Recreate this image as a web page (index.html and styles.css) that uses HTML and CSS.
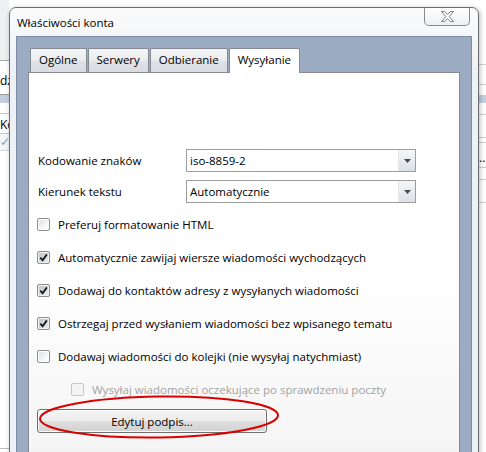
FILE: index.html
```html
<!DOCTYPE html>
<html lang="pl">
<head>
<meta charset="utf-8">
<title>Właściwości konta</title>
<link rel="stylesheet" href="styles.css">
</head>
<body>
<div class="desktop">
  <div class="app">
    <div class="pane pane-left">
      <div class="bg-top"></div>
      <div class="brow brow-dz">dz</div>
      <div class="bband"></div>
      <div class="bgap"></div>
      <div class="brow brow-ko">Ko</div>
      <div class="brow brow-check">✓</div>
      <div class="bfill"></div>
    </div>
    <div class="pane pane-right">
      <div class="r-top"></div>
      <div class="r-row r-h19"></div>
      <div class="r-gap10"></div>
      <div class="bband"></div>
      <div class="r-row r-h11"></div>
      <div class="r-row r-h22"></div>
      <div class="r-row r-h4"></div>
      <div class="r-row r-dots">...</div>
      <div class="r-row r-h11"></div>
      <div class="r-row r-h22"></div>
    </div>
  </div>

  <div class="dialog">
    <div class="titlebar">
      <span class="title">Właściwości konta</span>
      <div class="close">
        <svg width="13" height="11" viewBox="0 0 13 11"><path d="M0.5 0.5 H3.6 L6.5 3.4 L9.4 0.5 H12.5 L8.2 5.5 L12.5 10.5 H9.4 L6.5 7.6 L3.6 10.5 H0.5 L4.8 5.5 Z" fill="#ffffff" stroke="#7d7d7d" stroke-width="1" stroke-linejoin="round"/></svg>
      </div>
    </div>
    <div class="client">
      <div class="tabs">
        <div class="tab">Ogólne</div>
        <div class="tab">Serwery</div>
        <div class="tab">Odbieranie</div>
        <div class="tab active">Wysyłanie</div>
      </div>
      <div class="panel">
        <div class="field">
          <span class="field-label">Kodowanie znaków</span>
          <div class="select">
            <span class="select-value">iso-8859-2</span>
            <span class="select-btn"><svg width="7" height="4" viewBox="0 0 7 4"><path d="M0 0 H7 L3.5 4 Z" fill="#4b4b4b"/></svg></span>
          </div>
        </div>
        <div class="field field-second">
          <span class="field-label">Kierunek tekstu</span>
          <div class="select">
            <span class="select-value">Automatycznie</span>
            <span class="select-btn"><svg width="7" height="4" viewBox="0 0 7 4"><path d="M0 0 H7 L3.5 4 Z" fill="#4b4b4b"/></svg></span>
          </div>
        </div>

        <div class="check-row first">
          <span class="cb"></span>
          <span class="cb-label">Preferuj formatowanie HTML</span>
        </div>
        <div class="check-row">
          <span class="cb checked"><svg width="9" height="9" viewBox="0 0 9 9"><path d="M1.3 4.6 L3.6 7.2 L7.9 1.4" fill="none" stroke="#1a1a1a" stroke-width="1.8"/></svg></span>
          <span class="cb-label">Automatycznie zawijaj wiersze wiadomości wychodzących</span>
        </div>
        <div class="check-row">
          <span class="cb checked"><svg width="9" height="9" viewBox="0 0 9 9"><path d="M1.3 4.6 L3.6 7.2 L7.9 1.4" fill="none" stroke="#1a1a1a" stroke-width="1.8"/></svg></span>
          <span class="cb-label">Dodawaj do kontaktów adresy z wysyłanych wiadomości</span>
        </div>
        <div class="check-row">
          <span class="cb checked"><svg width="9" height="9" viewBox="0 0 9 9"><path d="M1.3 4.6 L3.6 7.2 L7.9 1.4" fill="none" stroke="#1a1a1a" stroke-width="1.8"/></svg></span>
          <span class="cb-label">Ostrzegaj przed wysłaniem wiadomości bez wpisanego tematu</span>
        </div>
        <div class="check-row">
          <span class="cb"></span>
          <span class="cb-label">Dodawaj wiadomości do kolejki (nie wysyłaj natychmiast)</span>
        </div>
        <div class="check-row sub disabled">
          <span class="cb"></span>
          <span class="cb-label">Wysyłaj wiadomości oczekujące po sprawdzeniu poczty</span>
        </div>

        <button class="btn">Edytuj podpis...</button>

        <svg class="annotation" width="246" height="50" viewBox="0 0 246 50">
          <ellipse cx="122" cy="23" rx="119" ry="20.5" transform="rotate(-0.8 122 23)" fill="none" stroke="#d90000" stroke-width="2"/>
        </svg>
      </div>
    </div>
  </div>
</div>
</body>
</html>
```

FILE: styles.css
```css
* { box-sizing: border-box; }

html, body {
  margin: 0;
  padding: 0;
  background: #ffffff;
}

body {
  font-family: "Open Sans", "Noto Sans", sans-serif;
  font-size: 11.5px;
  color: #000000;
}

.desktop {
  position: relative;
  width: 486px;
  height: 452px;
  overflow: hidden;
}

/* ---------- background application ---------- */
.app {
  display: flex;
  justify-content: space-between;
  height: 452px;
}

.pane {
  display: flex;
  flex-direction: column;
  overflow: hidden;
  white-space: nowrap;
  font-size: 12px;
}

.pane-left { width: 9px; }
.pane-right { width: 7px; }

.bg-top {
  height: 61px;
  background: #eef0f2;
  border-bottom: 1px solid #a8a8a8;
}

.brow {
  line-height: 16px;
  overflow: hidden;
}

.brow-dz {
  height: 34px;
  padding-top: 12px;
  border-bottom: 1px solid #9c9c9c;
}

.bband {
  height: 8px;
  background: #c3cfde;
}

.bgap {
  height: 11px;
  border-bottom: 1px solid #c9c9c9;
}

.brow-ko {
  height: 20px;
  padding-top: 3px;
  border-bottom: 1px solid #c9c9c9;
}

.brow-check {
  height: 17px;
  color: #8ea2b8;
  font-size: 12px;
  line-height: 16px;
  background: #f3f6f9;
  border-bottom: 1px solid #d6d6d6;
}

.bfill {
  flex: 1;
  border-bottom: 1px solid #bdbdbd;
  margin-bottom: 3px;
}

.r-top {
  height: 65px;
  border-bottom: 1px solid #cfcfcf;
}

.r-row { border-bottom: 1px solid #cfcfcf; }
.r-h19 { height: 20px; }
.r-gap10 { height: 10px; }
.r-h11 { height: 12px; }
.r-h22 { height: 23px; }
.r-h4 { height: 5px; }
.r-dots {
  height: 25px;
  padding-top: 8px;
  line-height: 14px;
  font-size: 12px;
  overflow: hidden;
}

/* ---------- dialog window ---------- */
.dialog {
  position: absolute;
  left: 9px;
  top: 7px;
  width: 470px;
  height: 470px;
  border: 1px solid #6e6e6e;
  border-radius: 7px 7px 0 0;
  background: linear-gradient(#fbfbfc, #eef1f5 60px, #eef1f5);
  box-shadow: 1px 1px 5px rgba(0, 0, 0, 0.28);
  display: flex;
  flex-direction: column;
}

.titlebar {
  height: 28px;
  display: flex;
  justify-content: space-between;
  align-items: center;
  padding-left: 7px;
}

.title {
  font-size: 11.5px;
  color: #000;
}

.close {
  align-self: flex-start;
  width: 46px;
  height: 18px;
  margin-right: 8px;
  border: 1px solid #8a8a8a;
  border-top: none;
  border-radius: 0 0 5px 5px;
  background: linear-gradient(#fefefe, #edf0f3);
  display: flex;
  align-items: center;
  justify-content: center;
}

.client {
  flex: 1;
  margin: 0 6px;
  border: 1px solid #7d8ca2;
  border-bottom: none;
  background: #9babc1;
  padding: 11px 11px 0;
  display: flex;
  flex-direction: column;
}

.tabs {
  display: flex;
  gap: 1px;
  padding-left: 2px;
  height: 24px;
  align-items: flex-end;
  position: relative;
  z-index: 1;
}

.tab {
  height: 24px;
  line-height: 22px;
  padding: 0 8px;
  border: 1px solid #858a94;
  border-bottom: none;
  border-radius: 2px 2px 0 0;
  background: linear-gradient(#f4f5f6, #eaecee 50%, #dfe2e6 51%, #d8dbe0);
  white-space: nowrap;
}

.tab.active {
  height: 25px;
  margin-bottom: -1px;
  background: #ffffff;
  line-height: 22px;
}

.panel {
  flex: 1;
  position: relative;
  border: 1px solid #858a94;
  border-bottom: none;
  background: linear-gradient(#ffffff, #ffffff 200px, #f3f3f3);
  padding: 76px 0 0 8px;
  display: flex;
  flex-direction: column;
}

.field {
  display: flex;
  align-items: center;
  height: 23px;
}

.field-second { margin-top: 8px; }

.field-label {
  width: 149px;
  padding-left: 1px;
}

.select {
  width: 230px;
  height: 23px;
  border: 1px solid #9d9d9d;
  background: #ffffff;
  display: flex;
  align-items: center;
}

.select-value {
  flex: 1;
  padding-left: 3px;
}

.select-btn {
  width: 17px;
  height: 21px;
  border-left: 1px solid #e4e6e9;
  background: linear-gradient(#f6f7f8, #e8ebef 50%, #dde1e6);
  display: flex;
  align-items: center;
  justify-content: center;
}

.check-row {
  height: 33px;
  display: flex;
  align-items: center;
  gap: 8px;
}

.check-row.first { margin-top: 5px; }

.check-row.sub { padding-left: 34px; }

.cb {
  width: 13px;
  height: 13px;
  border: 1px solid #8e8f8f;
  border-radius: 2px;
  background: linear-gradient(135deg, #dadee4, #f5f6f8 60%, #ffffff);
  box-shadow: inset 0 0 0 1px #ffffff;
  display: flex;
  align-items: center;
  justify-content: center;
  flex-shrink: 0;
}

.cb.checked {
  background: linear-gradient(135deg, #b9bfc8, #d7dbe1 55%, #eceef1);
  box-shadow: inset 0 0 0 1px #f0f1f3;
}

.disabled .cb {
  border-color: #c6c6c6;
  background: #f4f4f4;
  box-shadow: none;
}

.disabled .cb-label { color: #a3a3a3; }

.cb-label { white-space: nowrap; }

.btn {
  margin-top: 3px;
  align-self: flex-start;
  width: 230px;
  height: 24px;
  font-family: inherit;
  font-size: 11.5px;
  color: #000;
  border: 1px solid #707070;
  border-radius: 3px;
  background: linear-gradient(#f4f4f4, #ececec 50%, #dedede 51%, #d2d2d2);
  box-shadow: inset 0 0 0 1px #fbfbfb;
  padding: 0;
}

.annotation {
  position: absolute;
  left: 8px;
  top: 321px;
  pointer-events: none;
}
```
